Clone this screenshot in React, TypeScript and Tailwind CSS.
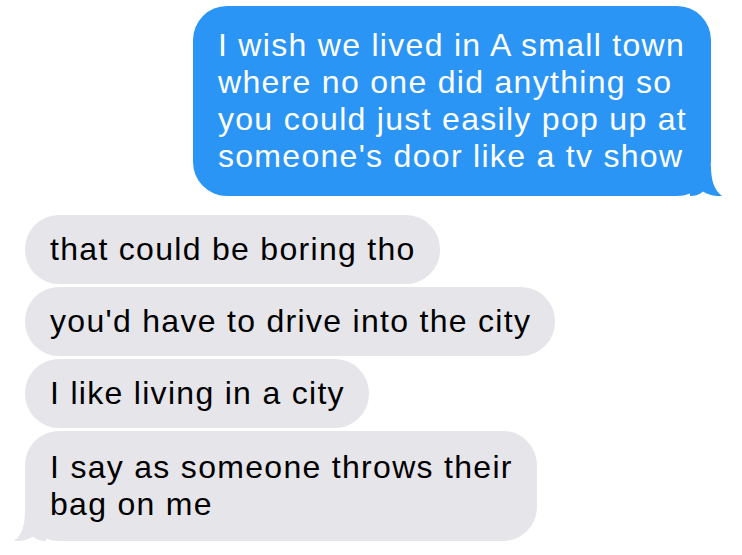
import React from "react";

const font = { fontFamily: '"Liberation Sans", Arial, sans-serif' };

function BlueTail() {
  return (
    <svg
      className="absolute bottom-0 right-[-11px]"
      width="32"
      height="30"
      viewBox="0 0 32 30"
    >
      <path
        d="M0 0 L21 0 C21 14 24 24 32 30 C26 30.6 18 29 13 25.5 C10 28.5 5 30 0 30 Z"
        fill="#2b95f6"
      />
    </svg>
  );
}

function GrayTail() {
  return (
    <svg
      className="absolute bottom-0 left-[-11px]"
      width="32"
      height="30"
      viewBox="0 0 32 30"
    >
      <path
        d="M32 0 L11 0 C11 14 8 24 0 30 C6 30.6 14 29 19 25.5 C22 28.5 27 30 32 30 Z"
        fill="#e5e5ea"
      />
    </svg>
  );
}

function Incoming({ children }: { children: React.ReactNode }) {
  return (
    <div className="relative self-start ml-[25px] rounded-[34px] bg-[#e5e5ea] pl-[25px] pr-[24px] py-4 text-black">
      {children}
    </div>
  );
}

export default function App() {
  return (
    <div
      className="w-[742px] h-[555px] bg-white overflow-hidden flex flex-col pt-[6px] text-[32px] leading-[37px] tracking-[1.3px]"
      style={font}
    >
      <div className="relative self-end mr-[31px] rounded-[34px] bg-[#2b95f6] pl-[25px] pr-[24px] py-[21px] text-white">
        I wish we lived in A small town
        <br />
        where no one did anything so
        <br />
        you could just easily pop up at
        <br />
        someone's door like a tv show
        <BlueTail />
      </div>

      <div className="flex flex-col gap-[3px] mt-[19px]">
        <Incoming>that could be boring tho</Incoming>
        <Incoming>you'd have to drive into the city</Incoming>
        <Incoming>I like living in a city</Incoming>
        <div className="relative self-start ml-[25px] rounded-[34px] bg-[#e5e5ea] pl-[25px] pr-[24px] py-[18px] text-black">
          I say as someone throws their
          <br />
          bag on me
          <GrayTail />
        </div>
      </div>
    </div>
  );
}
